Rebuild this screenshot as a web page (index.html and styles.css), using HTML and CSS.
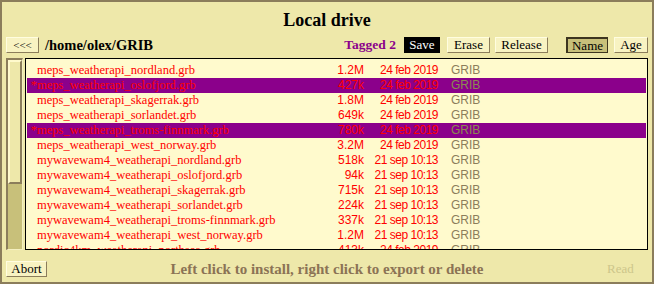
FILE: index.html
```html
<!DOCTYPE html>
<html lang="en">
<head>
    <meta charset="UTF-8">
    <title>Local drive</title>
    <link rel="stylesheet" href="styles.css">
</head>
<body>
<div class="window">

    <h1 class="title">Local drive</h1>

    <div class="toolbar">
        <button class="btn btn-back">&lt;&lt;&lt;</button>
        <span class="path">/home/olex/GRIB</span>
        <span class="tagged">Tagged 2</span>
        <button class="btn btn-save">Save</button>
        <button class="btn btn-erase">Erase</button>
        <button class="btn btn-release">Release</button>
        <button class="btn btn-name pressed">Name</button>
        <button class="btn btn-age">Age</button>
    </div>

    <div class="main">
        <div class="scrollbar">
            <div class="thumb"></div>
        </div>
        <div class="list">
            <div class="row"><span class="mark"></span><span class="name">meps_weatherapi_nordland.grb</span><span class="size">1.2M</span><span class="date">24 feb 2019</span><span class="type">GRIB</span></div>
            <div class="row tagged-row"><span class="mark">*</span><span class="name">meps_weatherapi_oslofjord.grb</span><span class="size">427k</span><span class="date">24 feb 2019</span><span class="type">GRIB</span></div>
            <div class="row"><span class="mark"></span><span class="name">meps_weatherapi_skagerrak.grb</span><span class="size">1.8M</span><span class="date">24 feb 2019</span><span class="type">GRIB</span></div>
            <div class="row"><span class="mark"></span><span class="name">meps_weatherapi_sorlandet.grb</span><span class="size">649k</span><span class="date">24 feb 2019</span><span class="type">GRIB</span></div>
            <div class="row tagged-row"><span class="mark">*</span><span class="name">meps_weatherapi_troms-finnmark.grb</span><span class="size">780k</span><span class="date">24 feb 2019</span><span class="type">GRIB</span></div>
            <div class="row"><span class="mark"></span><span class="name">meps_weatherapi_west_norway.grb</span><span class="size">3.2M</span><span class="date">24 feb 2019</span><span class="type">GRIB</span></div>
            <div class="row"><span class="mark"></span><span class="name">mywavewam4_weatherapi_nordland.grb</span><span class="size">518k</span><span class="date">21 sep 10:13</span><span class="type">GRIB</span></div>
            <div class="row"><span class="mark"></span><span class="name">mywavewam4_weatherapi_oslofjord.grb</span><span class="size">94k</span><span class="date">21 sep 10:13</span><span class="type">GRIB</span></div>
            <div class="row"><span class="mark"></span><span class="name">mywavewam4_weatherapi_skagerrak.grb</span><span class="size">715k</span><span class="date">21 sep 10:13</span><span class="type">GRIB</span></div>
            <div class="row"><span class="mark"></span><span class="name">mywavewam4_weatherapi_sorlandet.grb</span><span class="size">224k</span><span class="date">21 sep 10:13</span><span class="type">GRIB</span></div>
            <div class="row"><span class="mark"></span><span class="name">mywavewam4_weatherapi_troms-finnmark.grb</span><span class="size">337k</span><span class="date">21 sep 10:13</span><span class="type">GRIB</span></div>
            <div class="row"><span class="mark"></span><span class="name">mywavewam4_weatherapi_west_norway.grb</span><span class="size">1.2M</span><span class="date">21 sep 10:13</span><span class="type">GRIB</span></div>
            <div class="row"><span class="mark"></span><span class="name">nordic4km_weatherapi_northsea.grb</span><span class="size">413k</span><span class="date">24 feb 2019</span><span class="type">GRIB</span></div>
        </div>
    </div>

    <div class="footer">
        <button class="btn btn-abort">Abort</button>
        <span class="hint">Left click to install, right click to export or delete</span>
        <span class="status">Read</span>
    </div>

</div>
</body>
</html>
```

FILE: styles.css
```css
body {
    margin: 0;
    padding: 0;
    font-family: 'Liberation Serif', 'Times New Roman', serif;
}

.window {
    box-sizing: border-box;
    width: 654px;
    height: 284px;
    border: 2px solid #8b7d5b;
    background-color: #eee8aa; /* palegoldenrod */
    padding: 7px 4px 0 4px;
    display: flex;
    flex-direction: column;
}

.title {
    margin: 0;
    font-size: 18px;
    line-height: 22px;
    font-weight: bold;
    text-align: center;
    color: #000;
}

/* ---- toolbar ---- */

.toolbar {
    display: flex;
    align-items: center;
    height: 16px;
    margin-top: 6px;
}

.btn {
    box-sizing: border-box;
    height: 16px;
    padding: 0;
    margin: 0;
    font-family: 'Liberation Serif', 'Times New Roman', serif;
    font-size: 13px;
    line-height: 14px;
    color: #000;
    background-color: #f8f3c2;
    border: 1px solid;
    border-color: #fffde0 #8b7d5b #8b7d5b #fffde0;
    text-align: center;
    cursor: pointer;
}

.btn-back { width: 33px; font-size: 11px; }
.btn-save { width: 36px; margin-left: 8px; background-color: #000; color: #fff; border-color: #000; }
.btn-erase { width: 43px; margin-left: 7px; }
.btn-release { width: 53px; margin-left: 5px; }
.btn-name { width: 42px; margin-left: 18px; }
.btn-age { width: 34px; margin-left: 6px; }
.btn-abort { width: 41px; }

.btn.pressed {
    background-color: #c8c07a;
    border-width: 2px 1px 1px 2px;
    border-color: #3d3520;
    line-height: 13px;
}

.path {
    margin-left: 6px;
    font-size: 14.5px;
    font-weight: bold;
    color: #000;
}

.tagged {
    margin-left: auto;
    font-size: 13.5px;
    font-weight: bold;
    color: #8b008b;
}

/* ---- file list ---- */

.main {
    display: flex;
    gap: 2px;
    height: 192px;
    margin-top: 5px;
}

.scrollbar {
    box-sizing: border-box;
    width: 17px;
    background-color: #c8c07a;
    border-style: solid;
    border-width: 2px 1px 1px 2px;
    border-color: #8b7d5b #f4efc0 #f4efc0 #8b7d5b;
}

.thumb {
    box-sizing: border-box;
    height: 124px;
    background-color: #eee8aa;
    border-style: solid;
    border-width: 2px;
    border-color: #fffacd #8b7d5b #8b7d5b #fffacd;
}

.list {
    box-sizing: border-box;
    flex: 1;
    border: 1px solid #000;
    background-color: #fffacd; /* lemonchiffon */
    padding: 4px 1px 0 1px;
    overflow: hidden;
}

.row {
    display: grid;
    grid-template-columns: 10px 283px 44px 74px 1fr;
    height: 15px;
    line-height: 15px;
    font-size: 12.5px;
    color: #ff0000;
    white-space: nowrap;
}

.tagged-row {
    background-color: #8b008b; /* darkmagenta */
}

.mark {
    text-align: right;
}

.size,
.date {
    text-align: right;
    font-family: 'Liberation Sans', Arial, sans-serif;
    font-size: 12px;
}

.date {
    letter-spacing: -0.5px;
}

.type {
    padding-left: 13px;
    font-family: 'Liberation Sans', Arial, sans-serif;
    font-size: 12px;
    color: #8b7d5b;
}

.tagged-row .type {
    color: #8b8b50;
}

/* ---- footer ---- */

.footer {
    display: flex;
    align-items: center;
    height: 16px;
    margin-top: 11px;
}

.hint {
    flex: 1;
    text-align: center;
    font-size: 15px;
    font-weight: bold;
    color: #8b7355;
}

.status {
    width: 41px;
    font-size: 13px;
    color: #cdc68a;
}
```
